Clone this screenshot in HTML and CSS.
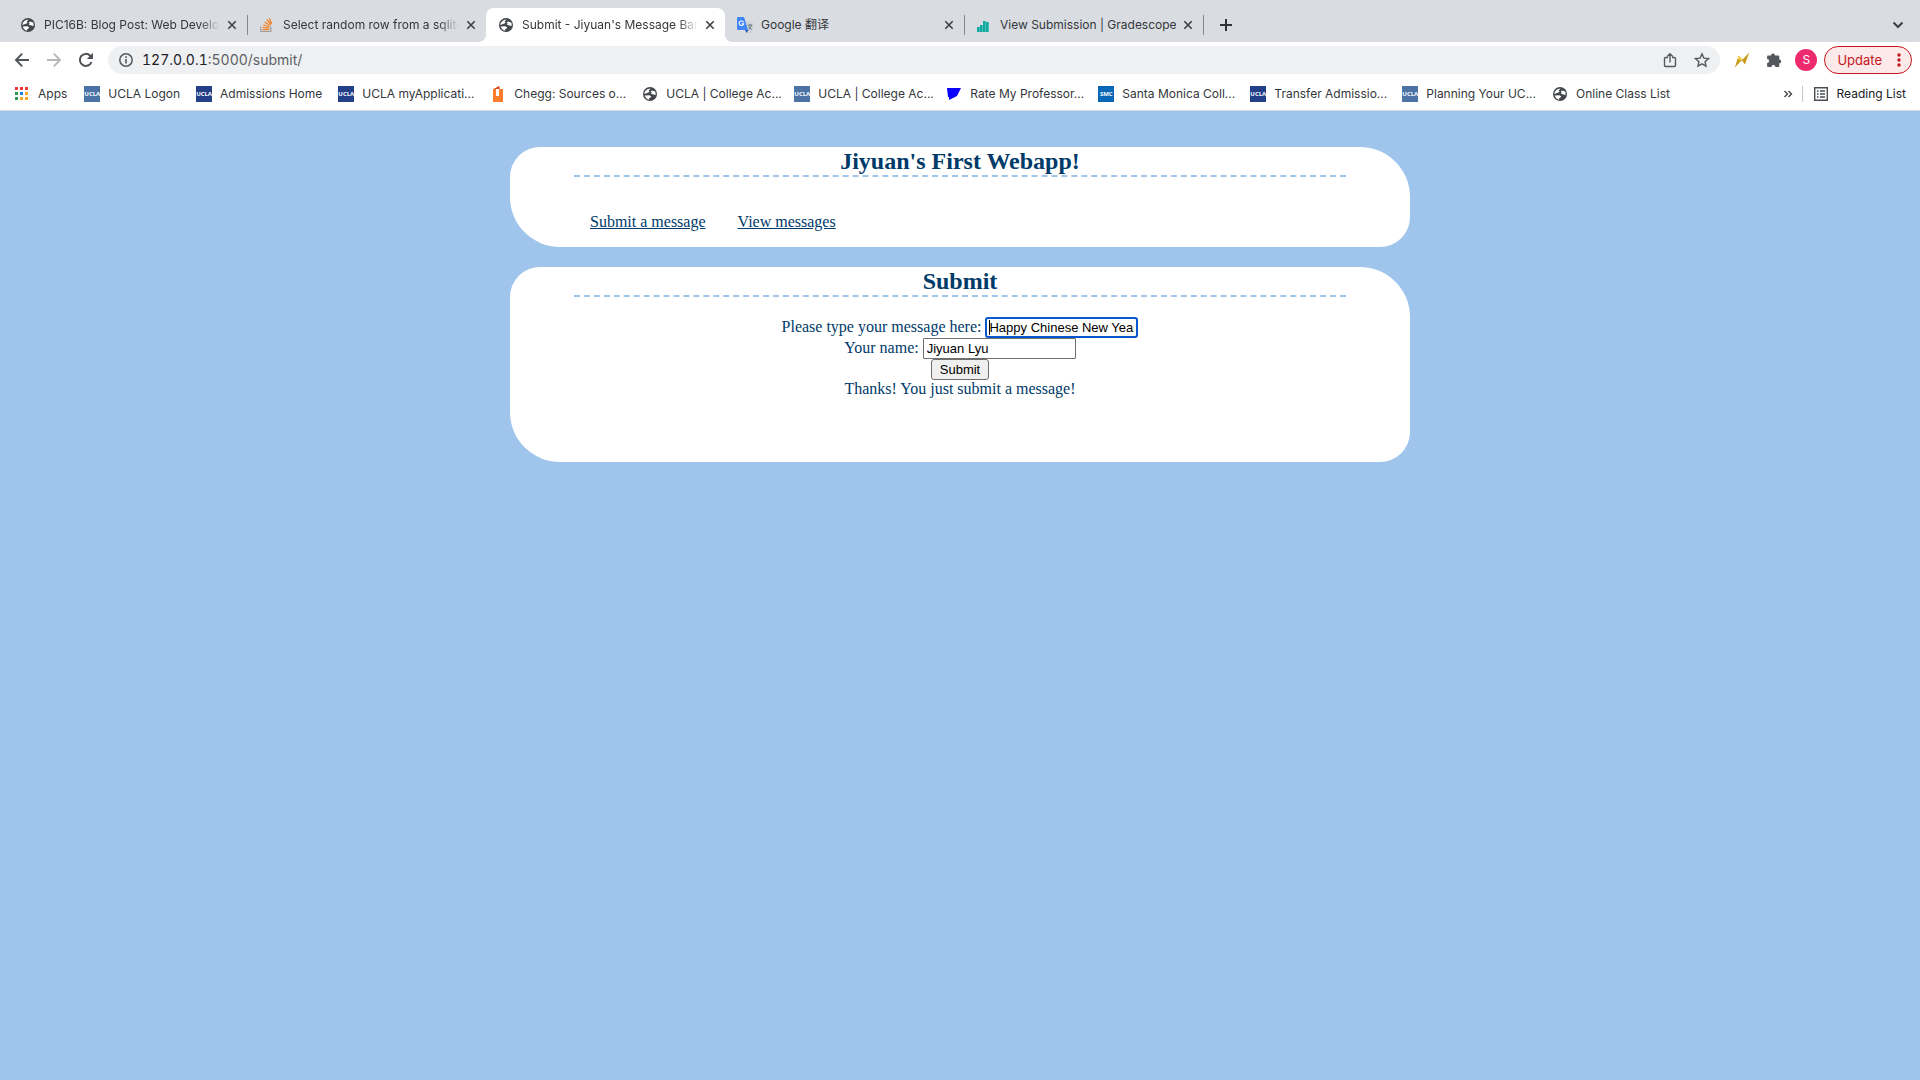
FILE: index.html
```html
<!DOCTYPE html>
<html lang="en">
<head>
<meta charset="utf-8">
<title>Submit - Jiyuan's Message Bank</title>
<link rel="stylesheet" href="styles.css">
</head>
<body>
<svg class="defs" aria-hidden="true">
  <symbol id="globe" viewBox="0 0 16 16"><circle cx="8" cy="8" r="7" fill="#43464b"/><path d="M8.6 2.4 6.7 4.6 7.6 6 4.4 7.3 2.3 8.1C2.5 5 5 2.5 8.6 2.4ZM10 4.6l3.2.9c.5 1.100.6 2.400.3 3.500L11.500 8.600 9 7.800 9.600 6.200 8.800 5.400ZM2.700 9.500l4.600-.3 1.900 1.100-.9 1.500-1.300.5.3 1.400C5 13.300 3.300 11.700 2.700 9.500Z" fill="#fff"/></symbol>
  <symbol id="close" viewBox="0 0 16 16"><path d="m4.300 4.300 7.400 7.400m0-7.400-7.400 7.400" stroke="#3c4043" stroke-width="1.600" fill="none"/></symbol>
</svg>

<header class="browser">
  <div class="tabstrip">
    <div class="tab"><svg class="icon"><use href="#globe"/></svg><span class="tab-title">PIC16B: Blog Post: Web Development</span><button class="tab-close" aria-label="Close tab"><svg class="icon"><use href="#close"/></svg></button></div>
    <div class="tab divided"><svg class="icon" viewBox="0 0 16 16"><path d="M1.800 9.500v5h10v-5" fill="none" stroke="#9a9da1" stroke-width="1.200"/><path d="M3.500 12.600h6.600M3.700 10.300l6.500.8M4.300 7.700l6.200 2M5.700 5l5.500 3.400M7.900 2.500l4.200 5M10.500 1.200l2.200 5.600" stroke="#f48024" stroke-width="1.200"/></svg><span class="tab-title">Select random row from a sqlite table</span><button class="tab-close" aria-label="Close tab"><svg class="icon"><use href="#close"/></svg></button></div>
    <div class="tab active"><svg class="icon"><use href="#globe"/></svg><span class="tab-title">Submit - Jiyuan's Message Bank</span><button class="tab-close" aria-label="Close tab"><svg class="icon"><use href="#close"/></svg></button></div>
    <div class="tab"><svg class="icon" viewBox="0 0 16 16"><path d="M7 4.500h8a1 1 0 0 1 1 1V15a1 1 0 0 1-1 1H10Z" fill="#d0d2d5"/><path d="M1 0h6l4 13H1a1 1 0 0 1-1-1V1a1 1 0 0 1 1-1Z" fill="#4285f4"/><path d="m8 13 1.500 3 2-3Z" fill="#3056c0"/><path d="M6.500 5.200A2.300 2.300 0 1 0 6.700 6.700H4.800" fill="none" stroke="#fff" stroke-width="1.100"/><path d="M10.800 8.200h4.500M13 7v1.200m1.500 0c-.5 2-1.500 3.200-3 4.200m.2-2.900c.8 1.500 1.800 2.300 3 3" fill="none" stroke="#607980"/></svg><span class="tab-title fits">Google 翻译</span><button class="tab-close" aria-label="Close tab"><svg class="icon"><use href="#close"/></svg></button></div>
    <div class="tab divided"><svg class="icon" viewBox="0 0 16 16"><path d="M1 10h2v5H1zM4 8h2v7H4zM7 4h2v11H7zM10 5h2v10h-2z" fill="#14a7a0"/><path d="M3 10h1v5H3zM6 8h1v7H6zM9 4h1v11H9zM12 5h1v10h-1z" fill="#45c0b8"/></svg><span class="tab-title fits">View Submission | Gradescope</span><button class="tab-close" aria-label="Close tab"><svg class="icon"><use href="#close"/></svg></button></div>
    <button class="new-tab divided" aria-label="New tab"><svg class="icon" viewBox="0 0 16 16"><path d="M8 2v12M2 8h12" stroke="#303236" stroke-width="2"/></svg></button>
    <button class="tab-search" aria-label="Search tabs"><svg class="icon" viewBox="0 0 16 16"><path d="m3.500 5.500 4.500 4.500 4.500-4.500" fill="none" stroke="#3c4043" stroke-width="2"/></svg></button>
  </div>

  <div class="toolbar">
    <div class="nav-buttons">
      <button aria-label="Back"><svg class="icon" viewBox="0 0 16 16"><path d="M15 8H2.500M8.200 1.700 2 8l6.200 6.300" fill="none" stroke="#4f5257" stroke-width="1.900"/></svg></button>
      <button aria-label="Forward"><svg class="icon" viewBox="0 0 16 16"><path d="M1 8h12.500M7.800 1.700 14 8l-6.200 6.300" fill="none" stroke="#b5b7ba" stroke-width="1.900"/></svg></button>
      <button aria-label="Reload"><svg class="icon" viewBox="0 0 16 16"><path d="M13.500 10a6 6 0 1 1-1.300-6.300l1.300 1.600" fill="none" stroke="#4f5257" stroke-width="2"/><path d="M15 .8V7H8.800Z" fill="#4f5257"/></svg></button>
    </div>
    <div class="omnibox">
      <svg class="icon" viewBox="0 0 16 16"><circle cx="8" cy="8" r="6.200" fill="none" stroke="#56595e" stroke-width="1.500"/><path d="M8 7v4.500M8 4.300v1.600" stroke="#56595e" stroke-width="1.600"/></svg>
      <span class="url"><span class="host">127.0.0.1</span>:5000/submit/</span>
      <button class="box-button" aria-label="Share"><svg class="icon" viewBox="0 0 16 16"><path d="M6 5.500H3.500a1 1 0 0 0-1 1v7a1 1 0 0 0 1 1h9a1 1 0 0 0 1-1v-7a1 1 0 0 0-1-1H10M8 10.500V2M5.200 4.500 8 1.700l2.800 2.800" fill="none" stroke="#55585d" stroke-width="1.400"/></svg></button>
      <button class="box-button" aria-label="Bookmark"><svg class="icon" viewBox="0 0 16 16"><path d="m8 1.900 1.900 4.200 4.600.5-3.400 3.100.9 4.500-4-2.300-4 2.300.9-4.500L1.500 6.600l4.600-.5Z" fill="none" stroke="#55585d" stroke-width="1.400"/></svg></button>
    </div>
    <button class="ext-button" aria-label="Extension"><svg class="icon" viewBox="0 0 16 16"><path d="M15.200.5 11 12.500 7.800 8.300.8 15.500 4.500 3.800 8.600 7.600Z" fill="#c99b1c"/><path d="m4.500 3.800-.9 3.200 4.200 1.300.8-.7Z" fill="#f3d64b"/></svg></button>
    <button class="ext-button" aria-label="Extensions"><svg class="icon" viewBox="0 0 16 16"><path d="M5 3.400a2 2 0 0 1 4 0h3.200c.7 0 1.100.5 1.100 1.100v3a1.900 1.900 0 0 1 0 3.800v2.600c0 .700-.5 1.100-1.100 1.100H9.400a2 2 0 0 0-4 0H2.200c-.7 0-1.100-.5-1.100-1.100V11a2 2 0 0 0 0-4V4.500c0-.6.4-1.100 1.100-1.100Z" fill="#55585d"/></svg></button>
    <button class="avatar" aria-label="Profile">S</button>
    <button class="update">Update<svg class="dots" viewBox="0 0 4 14"><g fill="#c5161d"><circle cx="2" cy="2" r="1.700"/><circle cx="2" cy="7" r="1.700"/><circle cx="2" cy="12" r="1.700"/></g></svg></button>
  </div>

  <nav class="bookmarks" aria-label="Bookmarks">
    <a href="#" class="apps"><svg class="icon" viewBox="0 0 16 16"><path d="M1 1h3v3H1zM6 1h3v3H6zM11 1h3v3h-3z" fill="#f03534"/><path d="M1 6h3v3H1z" fill="#2a9850"/><path d="M6 6h3v3H6z" fill="#1681e8"/><path d="M11 6h3v3h-3zM6 11h3v3H6zM11 11h3v3h-3z" fill="#fba918"/><path d="M1 11h3v3H1z" fill="#2a9850"/></svg><span>Apps</span></a>
    <a href="#"><span class="mark light">UCLA</span><span>UCLA Logon</span></a>
    <a href="#"><span class="mark dark">UCLA</span><span>Admissions Home</span></a>
    <a href="#" class="long"><span class="mark dark">UCLA</span><span>UCLA myApplicati...</span></a>
    <a href="#" class="long"><svg class="icon" viewBox="0 0 16 16"><path d="M3 3.500 9 0v3h4v13H3Z" fill="#fb7d2b"/><path d="M3 3.500 9.500 0v3Z" fill="#d94522"/><path d="M6 3h3v7H6z" fill="#fff"/></svg><span>Chegg: Sources o...</span></a>
    <a href="#" class="long"><svg class="icon"><use href="#globe"/></svg><span>UCLA | College Ac...</span></a>
    <a href="#" class="long"><span class="mark light">UCLA</span><span>UCLA | College Ac...</span></a>
    <a href="#" class="long"><svg class="icon" viewBox="0 0 16 16"><path d="M1 2h14l-4 8-8 4V11H2Z" fill="#0a00ff"/></svg><span>Rate My Professor...</span></a>
    <a href="#" class="long"><span class="mark smc">SMC</span><span>Santa Monica Coll...</span></a>
    <a href="#" class="long"><span class="mark dark">UCLA</span><span>Transfer Admissio...</span></a>
    <a href="#"><span class="mark light">UCLA</span><span>Planning Your UC...</span></a>
    <a href="#"><svg class="icon"><use href="#globe"/></svg><span>Online Class List</span></a>
    <button class="more" aria-label="More bookmarks"><svg class="icon" viewBox="0 0 16 16"><path d="m4.500 5 3 3-3 3M8.500 5l3 3-3 3" fill="none" stroke="#44474b" stroke-width="1.400"/></svg></button>
    <button class="reading"><svg class="icon" viewBox="0 0 16 16"><path d="M1.700 1.700h12.600v12.600H1.700z" fill="none" stroke="#4a4d52" stroke-width="1.400"/><path d="M4 5h1.500M7 5h5M4 8h1.500M7 8h5M4 11h1.500M7 11h5" stroke="#4a4d52" stroke-width="1.300"/></svg>Reading List</button>
  </nav>
</header>

<main class="page">
  <section class="card">
    <h1>Jiyuan's First Webapp!</h1>
    <nav class="links"><a href="#">Submit a message</a><a href="#">View messages</a></nav>
  </section>
  <section class="card">
    <h1>Submit</h1>
    <form class="message-form">
      <div class="row"><label for="message">Please type your message here:</label><span class="field focused"><input id="message" type="text" value="Happy Chinese New Year!"></span></div>
      <div class="row"><label for="name">Your name:</label><span class="field"><input id="name" type="text" value="Jiyuan Lyu"></span></div>
      <div class="row"><button type="button" class="submit">Submit</button></div>
      <p>Thanks! You just submit a message!</p>
    </form>
  </section>
</main>
</body>
</html>
```
FILE: styles.css
```css
* { box-sizing: border-box; }

body {
  margin: 0;
  min-height: 100vh;
  background: #9fc5ec;
  color: #003a69;
  font: 16px/18px "Liberation Serif", "Times New Roman", serif;
}

button { border: 0; padding: 0; background: none; font: inherit; color: inherit; }
.defs { position: absolute; width: 0; height: 0; }
.icon { display: block; flex: none; width: 16px; height: 16px; }

/* Browser chrome */
.browser {
  background: #fff;
  border-bottom: 1px solid #d3d6da;
  color: #34373b;
  font: 12px/16px Inter, "Noto Sans CJK SC", sans-serif;
}

.tabstrip { display: flex; height: 42px; padding: 8px 14px 0 8px; background: #d9dce1; }
.tab {
  position: relative;
  display: flex;
  align-items: center;
  flex: 0 1 239px;
  min-width: 0;
  padding: 0 7px 0 12px;
}
.tab-title {
  flex: 1;
  min-width: 0;
  margin: 0 4px 0 8px;
  overflow: hidden;
  white-space: nowrap;
  mask-image: linear-gradient(to left, transparent, #000 20px);
}
.fits { mask-image: none; }
.divided::before {
  content: "";
  position: absolute;
  left: 0;
  top: 7px;
  width: 1px;
  height: 20px;
  background: #85888c;
}
.active { background: #fff; border-radius: 8px 8px 0 0; }
.active::before, .active::after {
  content: "";
  position: absolute;
  bottom: 0;
  width: 8px;
  height: 8px;
}
.active::before { right: 100%; background: radial-gradient(circle at 0 0, transparent 8px, #fff 8px); }
.active::after { left: 100%; background: radial-gradient(circle at 100% 0, transparent 8px, #fff 8px); }
.new-tab { position: relative; padding-left: 15px; }
.tab-search { margin-left: auto; }

.toolbar { display: flex; align-items: center; height: 36px; padding: 0 8px 0 14px; }
.nav-buttons { display: flex; gap: 16px; margin-right: 14px; }
.omnibox {
  display: flex;
  align-items: center;
  flex: 1;
  height: 28px;
  margin-right: 14px;
  padding: 0 10px;
  border-radius: 14px;
  background: #eff0f2;
}
.url { flex: 1; margin-left: 8px; color: #5c5f64; font-size: 14px; font-variant-numeric: tabular-nums; }
.host { color: #202124; }
.box-button { margin-left: 16px; }
.ext-button { margin-right: 16px; }
.avatar {
  width: 22px;
  height: 22px;
  margin-right: 7px;
  margin-left: -3px;
  border-radius: 50%;
  background: #ee2a6e;
  color: #fff;
}
.update {
  display: flex;
  align-items: center;
  gap: 15px;
  height: 28px;
  padding: 0 10px 0 12px;
  border: 1px solid #c5161d;
  border-radius: 14px;
  background: #fce9e9;
  color: #c5161d;
  font-size: 13px;
}
.dots { width: 4px; height: 14px; }

.bookmarks { display: flex; align-items: center; height: 32px; padding: 0 14px; }
.bookmarks a {
  display: flex;
  gap: 8px;
  flex: none;
  margin-right: 16px;
  color: inherit;
  text-decoration: none;
  white-space: nowrap;
}
.bookmarks .apps { margin-right: 17px; }
.bookmarks .long { width: 136px; }
.mark {
  flex: none;
  width: 16px;
  height: 16px;
  color: #fff;
  font: bold 6px/16px "Open Sans", sans-serif;
  text-align: center;
}
.light { background: #4b73a5; }
.dark { background: #233f87; }
.smc { background: #0868b7; }
.more { margin-left: auto; margin-right: 6px; }
.reading {
  display: flex;
  align-items: center;
  gap: 8px;
  height: 16px;
  padding-left: 10px;
  border-left: 1px solid #c5c7ca;
  color: #202124;
}

/* Web page */
.page {
  display: flex;
  flex-direction: column;
  gap: 20px;
  max-width: 900px;
  margin: 0 auto;
  padding-top: 36px;
}
.card { padding: 0 64px; background: #fff; border-radius: 30px 50px; }
h1 {
  margin: 0;
  border-bottom: 2px dashed #9fc5ec;
  font-size: 24px;
  line-height: 28px;
  text-align: center;
}
.links { display: flex; gap: 32px; padding: 36px 16px 16px; }
.links a { color: inherit; }
.message-form { padding: 20px 0 64px; text-align: center; }
.row { display: flex; justify-content: center; height: 21px; line-height: 20px; gap: 4px; }
.field { position: relative; display: flex; }
input {
  width: 153px;
  height: 21px;
  padding: 1px 3px;
  border: 1px solid #6f6f6f;
  border-radius: 1px;
  background: #fff;
  color: #000;
  font: 13px "Liberation Sans", Arial, sans-serif;
}
.focused input { padding: 0 2px; border: 2px solid #0957cf; border-radius: 3px; }
.focused::before {
  content: "";
  position: absolute;
  left: 4px;
  top: 3px;
  width: 1px;
  height: 15px;
  background: #000;
}
.submit {
  width: 58px;
  border: 1px solid #6f6f6f;
  border-radius: 3px;
  background: #efefef;
  color: #000;
  font: 13px "Liberation Sans", Arial, sans-serif;
}
p { margin: 0; }
```
